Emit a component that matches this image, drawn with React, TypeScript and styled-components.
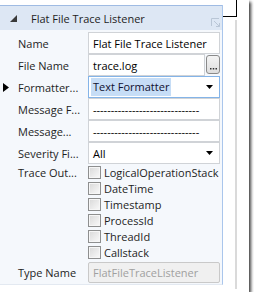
import styled, { createGlobalStyle } from 'styled-components';

const GlobalStyle = createGlobalStyle`
  html, body {
    margin: 0;
    background: #fff;
  }
  body {
    font-family: "Open Sans", "Noto Sans", sans-serif;
    font-size: 11px;
    color: #1e1e1e;
  }
`;

const Frame = styled.div`
  width: 249px;
  height: 292px;
  background: #fff;
  display: flex;
  box-shadow: 2px 2px 3px rgba(0, 0, 0, 0.75);
  overflow: hidden;
`;

const Panel = styled.div`
  margin-top: 5px;
  width: 223px;
  height: 280px;
  flex: none;
  box-sizing: border-box;
  background: #f5f8fc;
  border-right: 1px solid #aac6ec;
  border-bottom: 1px solid #e3e9f1;
  display: flex;
  flex-direction: column;
  overflow: hidden;
`;

const Header = styled.div`
  height: 25px;
  flex: none;
  box-sizing: border-box;
  border-top: 1px solid #9fbbe3;
  background: #dde7f4;
  display: flex;
  align-items: center;
  padding-left: 10px;
  gap: 14px;
  color: #1e1e1e;
`;

const Title = styled.span`
  flex: 1;
  white-space: nowrap;
`;

const ResizeGlyph = styled.svg`
  align-self: flex-end;
  margin: 0 1px 2px 0;
`;

const Body = styled.div`
  padding: 2px 2px 0 0;
  display: flex;
  flex-direction: column;
`;

const Row = styled.div<{ $h: number }>`
  display: grid;
  grid-template-columns: 88px 1fr;
  height: ${(p) => p.$h}px;
  align-items: center;
  min-width: 0;
`;

const Label = styled.div`
  display: flex;
  align-items: center;
  white-space: nowrap;
  overflow: hidden;
`;

const Marker = styled.div`
  width: 18px;
  flex: none;
  box-sizing: border-box;
  padding-left: 3px;
  display: flex;
  align-items: center;
`;

const Box = styled.div<{ $selected?: boolean; $disabled?: boolean; $h?: number }>`
  height: ${(p) => p.$h ?? 22}px;
  box-sizing: border-box;
  border: 1px solid ${(p) => (p.$selected ? '#84b4e8' : p.$disabled ? '#c9c9c9' : '#d0d3d7')};
  background: ${(p) => (p.$disabled ? '#f0f0f0' : '#fff')};
  color: ${(p) => (p.$disabled ? '#a0a0a0' : '#000')};
  border-radius: ${(p) => (p.$disabled ? 2 : 0)}px;
  display: flex;
  align-items: center;
  padding-left: ${(p) => (p.$selected ? 2 : 4)}px;
  white-space: nowrap;
  overflow: hidden;
  min-width: 0;
  flex: 1;
`;

const Highlight = styled.span`
  display: inline-block;
  line-height: 18px;
  padding: 0 2px;
  background: #c6ddf6;
  color: #101030;
`;

const DropArrow = styled.svg`
  margin-left: auto;
  margin-right: 6px;
  flex: none;
`;

const Split = styled.div`
  display: flex;
  align-items: flex-start;
  gap: 1px;
  height: 22px;
`;

const BrowseButton = styled.div`
  width: 14px;
  height: 19px;
  flex: none;
  box-sizing: border-box;
  margin-top: 1px;
  border: 1px solid #8a8a8a;
  border-radius: 3px;
  background: linear-gradient(#f4f4f4, #dedede);
  display: flex;
  align-items: flex-end;
  justify-content: center;
  padding-bottom: 3px;
`;

const Check = styled.div`
  display: flex;
  align-items: center;
  gap: 3px;
  white-space: nowrap;
  overflow: hidden;
  color: #1e1e1e;
`;

const CheckBox = styled.span`
  width: 13px;
  height: 13px;
  flex: none;
  box-sizing: border-box;
  border: 1px solid #8e8f8f;
  box-shadow: inset 0 0 0 1px #f6f6f6;
  background: linear-gradient(135deg, #d8d8d8, #fafafa);
`;

const Gutter = styled.div`
  width: 14px;
  flex: none;
  display: flex;
  flex-direction: column;
`;

const Corner = styled.div`
  height: 17px;
  box-sizing: border-box;
  border-right: 1px solid #000;
  border-bottom: 1px solid #000;
`;

const Rail = styled.div`
  margin-top: 3px;
  height: 269px;
  border-right: 2px solid #dadada;
  margin-right: 0;
`;

const fields: { label: string; value: string }[] = [
  { label: 'Name', value: 'Flat File Trace Listener' },
];

const traceOptions = ['LogicalOperationStack', 'DateTime', 'Timestamp', 'ProcessId', 'ThreadId', 'Callstack'];

const Arrow = () => (
  <DropArrow width="7" height="4" viewBox="0 0 7 4">
    <polygon points="0,0 7,0 3.5,4" fill="#000" />
  </DropArrow>
);

export default function App() {
  return (
    <>
      <GlobalStyle />
      <Frame>
        <Panel>
          <Header>
            <svg width="7" height="7" viewBox="0 0 7 7">
              <polygon points="7,0 7,7 0,7" fill="#3a3a3a" />
            </svg>
            <Title>Flat File Trace Listener</Title>
            <ResizeGlyph width="10" height="10" viewBox="0 0 10 10">
              <path d="M0.5 8V0.5H8" stroke="#b9c6d6" fill="none" />
              <path d="M3 3L8.5 8.5M5 8.5H8.5V5" stroke="#b9c6d6" fill="none" />
            </ResizeGlyph>
          </Header>
          <Body>
            {fields.map((f) => (
              <Row $h={22} key={f.label}>
                <Label>
                  <Marker />
                  {f.label}
                </Label>
                <Box>{f.value}</Box>
              </Row>
            ))}
            <Row $h={22}>
              <Label>
                <Marker />
                File Name
              </Label>
              <Split>
                <Box>trace.log</Box>
                <BrowseButton>
                  <svg width="7" height="2" viewBox="0 0 7 2">
                    <rect x="0" y="0" width="1.5" height="1.5" fill="#333" />
                    <rect x="2.75" y="0" width="1.5" height="1.5" fill="#333" />
                    <rect x="5.5" y="0" width="1.5" height="1.5" fill="#333" />
                  </svg>
                </BrowseButton>
              </Split>
            </Row>
            <Row $h={22}>
              <Label>
                <Marker>
                  <svg width="6" height="9" viewBox="0 0 6 9">
                    <polygon points="0,0 6,4.5 0,9" fill="#000" />
                  </svg>
                </Marker>
                Formatter...
              </Label>
              <Box $selected>
                <Highlight>Text Formatter</Highlight>
                <Arrow />
              </Box>
            </Row>
            <Row $h={22}>
              <Label>
                <Marker />
                Message F...
              </Label>
              <Box>------------------------------</Box>
            </Row>
            <Row $h={22}>
              <Label>
                <Marker />
                Message...
              </Label>
              <Box>------------------------------</Box>
            </Row>
            <Row $h={22}>
              <Label>
                <Marker />
                Severity Fi...
              </Label>
              <Box>
                All
                <Arrow />
              </Box>
            </Row>
            {traceOptions.map((opt, i) => (
              <Row $h={16} key={opt}>
                <Label>
                  <Marker />
                  {i === 0 ? 'Trace Out...' : ''}
                </Label>
                <Check>
                  <CheckBox />
                  {opt}
                </Check>
              </Row>
            ))}
            <Row $h={24}>
              <Label>
                <Marker />
                Type Name
              </Label>
              <Box $disabled $h={21}>
                FlatFileTraceListener
              </Box>
            </Row>
          </Body>
        </Panel>
        <Gutter>
          <Corner />
          <Rail />
        </Gutter>
      </Frame>
    </>
  );
}
